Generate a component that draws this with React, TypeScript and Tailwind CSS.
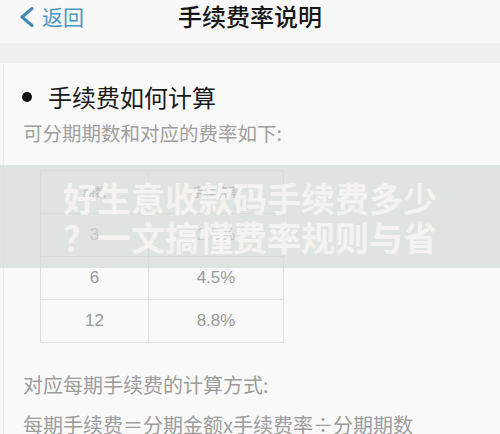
import React from "react";

const rows = [
  { a: "3", b: "2.5%" },
  { a: "6", b: "4.5%" },
  { a: "12", b: "8.8%" },
];

export default function App() {
  return (
    <div
      className="relative w-[500px] h-[434px] overflow-hidden bg-[#f9f9f9]"
      style={{ fontFamily: '"Noto Sans CJK SC", "Noto Sans", sans-serif' }}
    >
      {/* header */}
      <div className="relative h-[43px] bg-[#f8f8f8] flex items-center">
        <div className="flex items-center pl-[19px] text-[#4b97c2]">
          <svg width="17" height="20" viewBox="0 0 17 20" className="mt-[-10px]">
            <polyline points="13,1.5 3,10 13,18.5" fill="none" stroke="#3f88b7" strokeWidth="3" strokeLinecap="round" strokeLinejoin="round" />
          </svg>
          <span className="ml-[6px] text-[21px] leading-none mt-[-10px]">返回</span>
        </div>
        <div className="absolute inset-x-0 top-0 h-[32px] flex items-center justify-center text-[24px] font-medium text-[#161616] leading-none">
          手续费率说明
        </div>
      </div>
      <div className="h-[20px] bg-[#efefef]" />

      {/* content */}
      <div className="border-l border-[#ececec] ml-[3px] pl-[18px] pt-[18px]">
        <div className="flex items-center h-[32px]">
          <span className="w-[10px] h-[10px] rounded-full bg-[#111]" />
          <span className="ml-[16px] text-[24px] leading-[32px] text-[#1a1a1a]">手续费如何计算</span>
        </div>
        <div className="mt-[6px] h-[28px] leading-[28px] text-[19.5px] text-[#a0a0a0] ml-[1px]">
          可分期期数和对应的费率如下:
        </div>

        <div
          className="mt-[23px] ml-[18px] w-[244px] border border-[#dedede]"
          style={{ fontFamily: '"Liberation Sans", "Noto Sans CJK SC", sans-serif' }}
        >
          <div className="grid grid-cols-[108px_1fr] h-[43px] border-b border-[#dedede]">
            <div className="border-r border-[#dedede] flex items-center justify-center text-[12px] text-[#777]" style={{ fontFamily: '"Noto Sans CJK SC", sans-serif' }}>
              期数
            </div>
            <div className="flex items-center justify-center text-[12px] text-[#777]" style={{ fontFamily: '"Noto Sans CJK SC", sans-serif' }}>
              手续费率
            </div>
          </div>
          {rows.map((r, i) => (
            <div
              key={r.a}
              className={
                i < rows.length - 1
                  ? "grid grid-cols-[108px_1fr] h-[43px] border-b border-[#dedede]"
                  : "grid grid-cols-[108px_1fr] h-[42px]"
              }
            >
              <div className="border-r border-[#dedede] flex items-center justify-center text-[17px] text-[#9a9a9a]">
                {r.a}
              </div>
              <div className="flex items-center justify-center text-[17px] text-[#9a9a9a]">
                {r.b}
              </div>
            </div>
          ))}
        </div>

        <div className="mt-[27px] h-[30px] leading-[30px] text-[20px] text-[#9c9c9c] ml-[1px]">
          对应每期手续费的计算方式:
        </div>
        <div className="mt-[10px] h-[30px] leading-[30px] text-[20px] text-[#9c9c9c] ml-[1px]">
          每期手续费＝分期金额x手续费率÷分期期数
        </div>
      </div>

      {/* overlay banner */}
      <div className="absolute left-0 right-0 top-[165px] h-[103px] bg-[rgba(212,219,213,0.72)] flex flex-col items-center justify-center">
        <div className="text-[34px] leading-[39px] font-bold text-[#f5f3f0] whitespace-nowrap">
          好生意收款码手续费多少
        </div>
        <div className="text-[34px] leading-[39px] font-bold text-[#f5f3f0] whitespace-nowrap">
          ？一文搞懂费率规则与省
        </div>
      </div>
    </div>
  );
}
